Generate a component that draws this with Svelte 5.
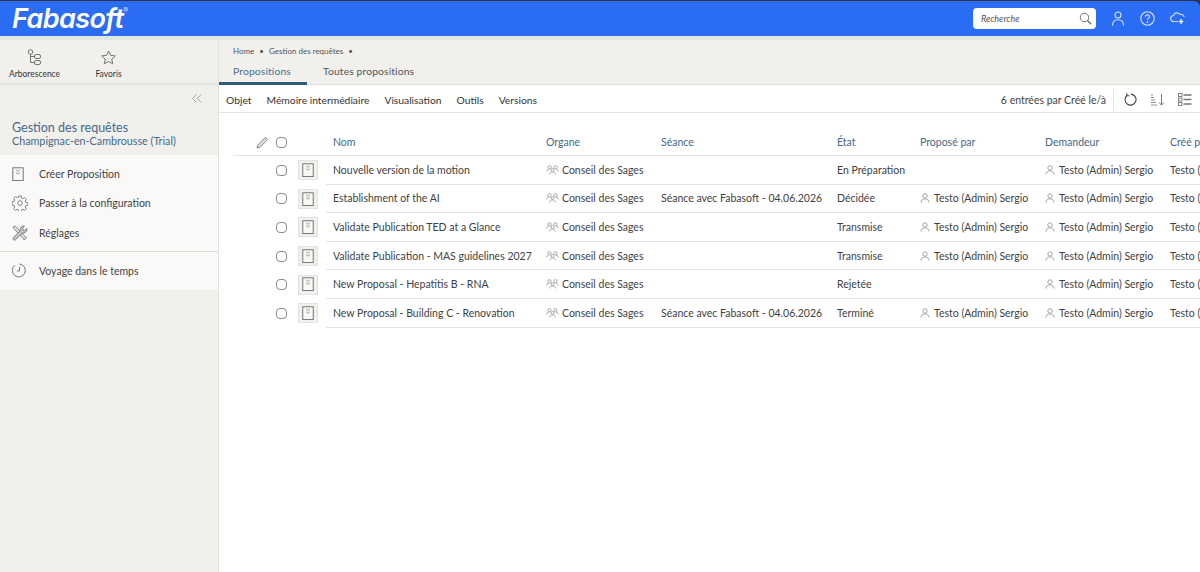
<script>
  const columns = ['Nom', 'Organe', 'Séance', 'État', 'Proposé par', 'Demandeur', 'Créé par'];
  const meeting = 'Séance avec Fabasoft - 04.06.2026';
  const person = 'Testo (Admin) Sergio';
  const rows = [
    { name: 'Nouvelle version de la motion', seance: '', etat: 'En Préparation', propose: false },
    { name: 'Establishment of the AI', seance: meeting, etat: 'Décidée', propose: true },
    { name: 'Validate Publication TED at a Glance', seance: '', etat: 'Transmise', propose: true },
    { name: 'Validate Publication - MAS guidelines 2027', seance: '', etat: 'Transmise', propose: true },
    { name: 'New Proposal - Hepatitis B - RNA', seance: '', etat: 'Rejetée', propose: false },
    { name: 'New Proposal - Building C - Renovation', seance: meeting, etat: 'Terminé', propose: true }
  ];
  const menus = ['Objet', 'Mémoire intermédiaire', 'Visualisation', 'Outils', 'Versions'];
</script>

{#snippet docIcon(size)}
  <svg width={size} height={size * 1.2} viewBox="0 0 15 18" fill="#f8f8f6" stroke="#666" stroke-width="1.1">
    <rect x="1" y="1" width="13" height="16" />
    <path d="M5 3.5l2.500 2 2.500-2M5 7l2.500 2 2.500-2" stroke="#888" stroke-width="1" fill="none" />
  </svg>
{/snippet}

{#snippet personIcon()}
  <svg class="person" width="10" height="10" viewBox="0 0 10 10" fill="none" stroke="#999" stroke-width="0.9">
    <circle cx="5" cy="3" r="2.2" />
    <path d="M1 9.5c0-2.4 1.7-3.6 4-3.6s4 1.2 4 3.6" />
  </svg>
{/snippet}

{#snippet groupIcon()}
  <svg class="group" width="13" height="10" viewBox="0 0 13 10" fill="none" stroke="#888" stroke-width="0.7">
    <circle cx="3.5" cy="2.2" r="1.6" />
    <circle cx="9.5" cy="2.2" r="1.6" />
    <circle cx="6.5" cy="5" r="1.5" />
    <path d="M0.7 6.5c0-1.5 1-2.3 2.4-2.3M12.3 6.5c0-1.5-1-2.3-2.4-2.3M3.7 9.5c0-1.6 1.2-2.6 2.8-2.6s2.8 1 2.8 2.6" />
  </svg>
{/snippet}

<div class="page">
  <header class="topbar">
    <div class="logo">Fabasoft<sup>®</sup></div>
    <div class="top-actions">
      <div class="search">
        <span>Recherche</span>
        <svg width="13" height="13" viewBox="0 0 13 13" fill="none" stroke="#777" stroke-width="1">
          <circle cx="5.5" cy="5.5" r="4.2" />
          <path d="M8.6 8.6l3.6 3.6" stroke-width="1.6" />
        </svg>
      </div>
      <svg class="top-icon" width="14" height="15" viewBox="0 0 14 15" fill="none" stroke="#d5e3ff" stroke-width="1.1">
        <circle cx="7" cy="4" r="3" />
        <path d="M1.5 14.5c0-3.6 2.3-5.7 5.5-5.700s5.500 2.100 5.500 5.700" />
      </svg>
      <svg class="top-icon" width="15" height="15" viewBox="0 0 15 15" fill="none" stroke="#d5e3ff" stroke-width="1.1">
        <circle cx="7.5" cy="7.5" r="6.7" />
        <path d="M5.5 5.8c0-1.2 1-1.900 2-1.900s2 .7 2 1.800c0 1.500-2 1.500-2 3.200" />
        <circle cx="7.5" cy="11" r="0.4" />
      </svg>
      <svg class="top-icon" width="15" height="13" viewBox="0 0 15 13" fill="none" stroke="#d5e3ff" stroke-width="1.1">
        <path d="M8 9.500H3.800a3 3 0 0 1-.3-6A3.600 3.600 0 0 1 10 2.500a2.900 2.900 0 0 1 4 2.500" />
        <path d="M11 7v5M8.800 9.500h4.400" stroke="#fff" stroke-width="1.3" />
      </svg>
    </div>
  </header>

  <div class="strip"></div>

  <div class="body">
    <aside class="sidebar">
      <nav class="side-tabs">
        <div class="side-tab">
          <svg width="15" height="17" viewBox="0 0 15 17" fill="none" stroke="#666" stroke-width="0.9">
            <circle cx="3.5" cy="3" r="2.3" />
            <rect x="7.5" y="5.500" width="6" height="4" rx="1.5" />
            <rect x="7.5" y="11.500" width="6" height="4" rx="1.5" />
            <path d="M3.5 5.300V13.500H7.500M3.500 7.500H7.500" />
          </svg>
          <span>Arborescence</span>
        </div>
        <div class="side-tab fav">
          <svg width="15" height="17" viewBox="0 0 15 15" fill="none" stroke="#666" stroke-width="0.9">
            <path d="M7.500 1l2 4.300 4.800.6-3.500 3.200.9 4.700-4.200-2.300-4.200 2.300.9-4.700L.7 5.900l4.800-.6z" />
          </svg>
          <span>Favoris</span>
        </div>
      </nav>

      <div class="collapse">
        <svg width="10" height="9" viewBox="0 0 10 9" fill="none" stroke="#999" stroke-width="0.9">
          <path d="M4.500 .5l-4 4 4 4M9.200 .5l-4 4 4 4" />
        </svg>
      </div>

      <div class="context">
        <div class="context-title">Gestion des requêtes</div>
        <div class="context-sub">Champignac-en-Cambrousse (Trial)</div>
      </div>

      <ul class="actions first">
        <li>
          <span class="action-icon">{@render docIcon(12)}</span>
          Créer Proposition
        </li>
        <li>
          <span class="action-icon">
            <svg width="16" height="16" viewBox="0 0 16 16" fill="none" stroke="#666" stroke-width="0.8">
              <circle cx="8" cy="8" r="2.3" />
              <path d="M6.800 1h2.400l.4 2 1.300.6 1.800-1 1.600 1.700-1 1.700.6 1.300 2 .5v2.400l-2 .4-.6 1.300 1 1.800-1.600 1.600-1.800-1-1.300.5-.4 2H6.800l-.4-2-1.300-.5-1.800 1-1.600-1.600 1-1.800-.6-1.300-2-.4V6.800l2-.5.600-1.300-1-1.700 1.600-1.700 1.800 1 1.300-.6z" />
            </svg>
          </span>
          Passer à la configuration
        </li>
        <li>
          <span class="action-icon">
            <svg width="16" height="16" viewBox="0 0 16 16" fill="none" stroke="#777" stroke-width="0.9">
              <path d="M1.500 1.500l1.800-.5 8 9 3 2.500-2 2.500-2.500-3-8-8.500z" fill="#e4e3e0" />
              <path d="M15 3.500l-2.300 2-1.700-.5-.4-1.800L12.500 1a4 4 0 0 0-4.300 5L1.500 12.500a1.500 1.500 0 0 0 2.200 2.200L10 8a4 4 0 0 0 5-4.500z" fill="#c4c4c2" />
            </svg>
          </span>
          Réglages
        </li>
      </ul>
      <ul class="actions">
        <li>
          <span class="action-icon">
            <svg width="15" height="15" viewBox="0 0 15 15" fill="none" stroke="#666" stroke-width="0.9">
              <path d="M3 2.200A6.500 6.500 0 1 0 7.500 1" />
              <path d="M7.500 4v4H4.800" />
            </svg>
          </span>
          Voyage dans le temps
        </li>
      </ul>
    </aside>

    <main class="content">
      <div class="crumbs-tabs">
        <div class="crumbs">
          <span>Home</span><i>•</i><span>Gestion des requêtes</span><i>•</i>
        </div>
        <div class="tabs">
          <div class="tab active">Propositions</div>
          <div class="tab">Toutes propositions</div>
        </div>
      </div>

      <div class="toolbar">
        <div class="menus">
          {#each menus as menu}
            <span>{menu}</span>
          {/each}
        </div>
        <div class="tools">
          <span class="count">6 entrées par Créé le/à</span>
          <span class="tool-sep"></span>
          <svg width="13" height="13" viewBox="0 0 13 13" fill="none" stroke="#444" stroke-width="1.1">
            <path d="M3.200 2.200A5.500 5.500 0 1 0 7 1.100" />
            <path d="M2.800 .2v2.600h2.600" />
          </svg>
          <svg width="15" height="12" viewBox="0 0 15 12" fill="none" stroke="#888" stroke-width="0.9">
            <path d="M1 1h2M1 3.500h3M1 6h4M1 8.500h5M1 11h6" />
            <path d="M11.500 0v11M9 8.500l2.500 2.500L14 8.500" stroke="#666" />
          </svg>
          <svg width="14" height="13" viewBox="0 0 14 13" fill="none" stroke="#777" stroke-width="0.9">
            <rect x=".5" y=".5" width="3.500" height="3" />
            <rect x=".5" y="5" width="3.500" height="3" />
            <rect x=".5" y="9.500" width="3.500" height="3" />
            <path d="M5.500 2h8M5.500 6.500h8M5.500 11h8" stroke-width="1.5" />
          </svg>
        </div>
      </div>

      <div class="table-wrap">
        <table>
          <thead>
            <tr>
              <th class="c-tool">
                <div class="tool-cell">
                  <svg width="13" height="13" viewBox="0 0 13 13" fill="none" stroke="#888" stroke-width="1">
                    <path d="M1 12l.8-3L9.500 1.300l2.200 2.200L4 11.200z" fill="#ddd" />
                  </svg>
                  <span class="check"></span>
                </div>
              </th>
              <th class="c-icon"></th>
              {#each columns as col}
                <th>{col}</th>
              {/each}
            </tr>
          </thead>
          <tbody>
            {#each rows as row}
              <tr>
                <td class="c-tool plain"><div class="tool-cell"><span class="check"></span></div></td>
                <td class="c-icon plain"><span class="doc-box">{@render docIcon(12)}</span></td>
                <td>{row.name}</td>
                <td>{@render groupIcon()}Conseil des Sages</td>
                <td>{row.seance}</td>
                <td>{row.etat}</td>
                <td>{#if row.propose}{@render personIcon()}{person}{/if}</td>
                <td>{@render personIcon()}{person}</td>
                <td>Testo (Admin) Sergio</td>
              </tr>
            {/each}
          </tbody>
        </table>
      </div>
    </main>
  </div>
</div>

<style>
  :global(body) {
    margin: 0;
    background: #fff;
  }

  .page {
    width: 1200px;
    height: 572px;
    overflow: hidden;
    display: flex;
    flex-direction: column;
    font-family: Lato, "Liberation Sans", sans-serif;
    font-size: 10.5px;
    color: #3a3a3a;
    background: #2b3444;
  }

  .topbar {
    margin-top: 1px;
    height: 35px;
    flex: none;
    display: flex;
    align-items: center;
    justify-content: space-between;
    background: #2a6df4;
    border-radius: 0 6px 0 0;
  }

  .logo {
    margin-left: 12px;
    color: #fff;
    font-family: Inter, Lato, sans-serif;
    font-size: 27px;
    font-weight: 600;
    font-style: italic;
    letter-spacing: -0.6px;
    line-height: 1;
  }

  .logo sup {
    font-size: 7px;
    font-weight: 400;
    font-style: normal;
    color: #cfdcff;
    vertical-align: 15px;
    line-height: 0;
  }

  .top-actions {
    display: flex;
    align-items: center;
    margin-right: 15px;
    gap: 15px;
  }

  .search {
    width: 123px;
    height: 21px;
    box-sizing: border-box;
    padding: 0 4px 0 8px;
    display: flex;
    align-items: center;
    justify-content: space-between;
    background: #fff;
    border-radius: 4px;
    font-size: 9px;
    font-style: italic;
    color: #555;
  }

  .strip {
    height: 4px;
    flex: none;
    background: #e2e7e4;
  }

  .body {
    flex: 1;
    display: flex;
    min-height: 0;
    background: #fff;
  }

  .sidebar {
    width: 218px;
    flex: none;
    background: #f1f0ed;
    border-right: 1px solid #e2e1de;
  }

  .side-tabs {
    height: 45px;
    box-sizing: border-box;
    display: flex;
    padding-top: 9px;
    padding-left: 8px;
    border-bottom: 2px solid #e4e3e0;
  }

  .side-tab {
    width: 53px;
    display: flex;
    flex-direction: column;
    align-items: center;
    gap: 3px;
    font-size: 8.5px;
    color: #333;
  }

  .side-tab.fav {
    width: 43px;
    margin-left: 26px;
  }

  .collapse {
    height: 9px;
    padding-top: 9px;
    padding-right: 16px;
    display: flex;
    justify-content: flex-end;
  }

  .context {
    height: 52px;
    box-sizing: border-box;
    padding: 18px 12px 0;
    color: #44698a;
  }

  .context-title {
    font-size: 12.5px;
    line-height: 13px;
  }

  .context-sub {
    font-size: 10.75px;
    line-height: 13px;
  }

  .actions {
    list-style: none;
    margin: 0;
    padding: 4px 0;
    background: #faf9f7;
  }

  .actions.first {
    height: 97px;
    box-sizing: border-box;
    border-bottom: 1px solid #dcdbd8;
    padding-top: 4px;
  }

  .actions li {
    height: 29.5px;
    display: flex;
    align-items: center;
    color: #444;
    font-size: 10.5px;
  }

  .action-icon {
    width: 39px;
    padding-left: 12px;
    box-sizing: border-box;
    display: flex;
    align-items: center;
    flex: none;
  }

  .content {
    flex: 1;
    min-width: 0;
    display: flex;
    flex-direction: column;
  }

  .crumbs-tabs {
    height: 45px;
    flex: none;
    box-sizing: border-box;
    background: #f1f0ed;
    border-bottom: 1px solid #dedddb;
  }

  .crumbs {
    padding: 6px 0 0 14px;
    height: 11px;
    display: flex;
    gap: 5px;
    font-size: 8px;
    line-height: 11px;
    color: #555;
  }

  .crumbs i {
    font-style: normal;
  }

  .tabs {
    margin-top: 4px;
    display: flex;
    height: 24px;
  }

  .tab {
    font-size: 10.4px;
    line-height: 16px;
    padding: 2px 0 0;
    color: #555;
    letter-spacing: 0.1px;
  }

  .tab.active {
    width: 88px;
    box-sizing: border-box;
    padding-left: 14px;
    margin-right: 16px;
    color: #4b7092;
    border-bottom: 3px solid #2f5d7c;
    height: 24px;
  }

  .toolbar {
    height: 28px;
    flex: none;
    box-sizing: border-box;
    display: flex;
    align-items: center;
    justify-content: space-between;
    border-bottom: 1px solid #e3e3e3;
    padding: 2px 8px 0 7px;
  }

  .menus {
    display: flex;
    gap: 15px;
    color: #333;
    font-size: 10.3px;
  }

  .tools {
    display: flex;
    align-items: center;
    gap: 13px;
  }

  .count {
    color: #444;
  }

  .tool-sep {
    width: 1px;
    height: 22px;
    background: #e3e3e3;
    margin: 0 -3px 0 -6px;
  }

  .table-wrap {
    padding: 16px 0 0 14px;
    overflow: hidden;
  }

  table {
    width: 1030px;
    table-layout: fixed;
    border-collapse: separate;
    border-spacing: 0;
  }

  th, td {
    padding: 0 0 0 7px;
    text-align: left;
    font-weight: 400;
    white-space: nowrap;
    overflow: hidden;
    box-sizing: border-box;
  }

  th {
    height: 27px;
    color: #44698a;
    border-bottom: 1px solid #e3e3e3;
    font-size: 10.5px;
  }

  td {
    height: 28.6px;
    border-bottom: 1px solid #e3e3e3;
    color: #3f3f3f;
  }

  td.plain {
    border-bottom: 0;
    padding: 0;
  }

  th.c-tool, td.c-tool {
    width: 59px;
    padding: 0;
  }

  th.c-icon, td.c-icon {
    width: 34px;
    padding: 0;
  }

  th:nth-child(3) { width: 213px; }
  th:nth-child(4) { width: 115px; }
  th:nth-child(5) { width: 176px; }
  th:nth-child(6) { width: 83px; }
  th:nth-child(7) { width: 125px; }
  th:nth-child(8) { width: 125px; }
  th:nth-child(9) { width: 125px; }

  .tool-cell {
    display: flex;
    align-items: center;
    justify-content: flex-end;
    gap: 7px;
    padding-right: 5px;
  }

  .check {
    width: 9px;
    height: 9px;
    display: block;
    border: 1px solid #8a8a8a;
    border-radius: 4px;
  }

  .doc-box {
    width: 20px;
    height: 20px;
    display: flex;
    align-items: center;
    justify-content: center;
    background: #f1f0ed;
    border: 1px solid #e3e3e3;
    box-sizing: border-box;
    margin-left: 6px;
  }

  .person {
    margin: 0 4px 0 0;
    vertical-align: -1px;
  }

  .group {
    margin-right: 3px;
    vertical-align: -1px;
  }
</style>
